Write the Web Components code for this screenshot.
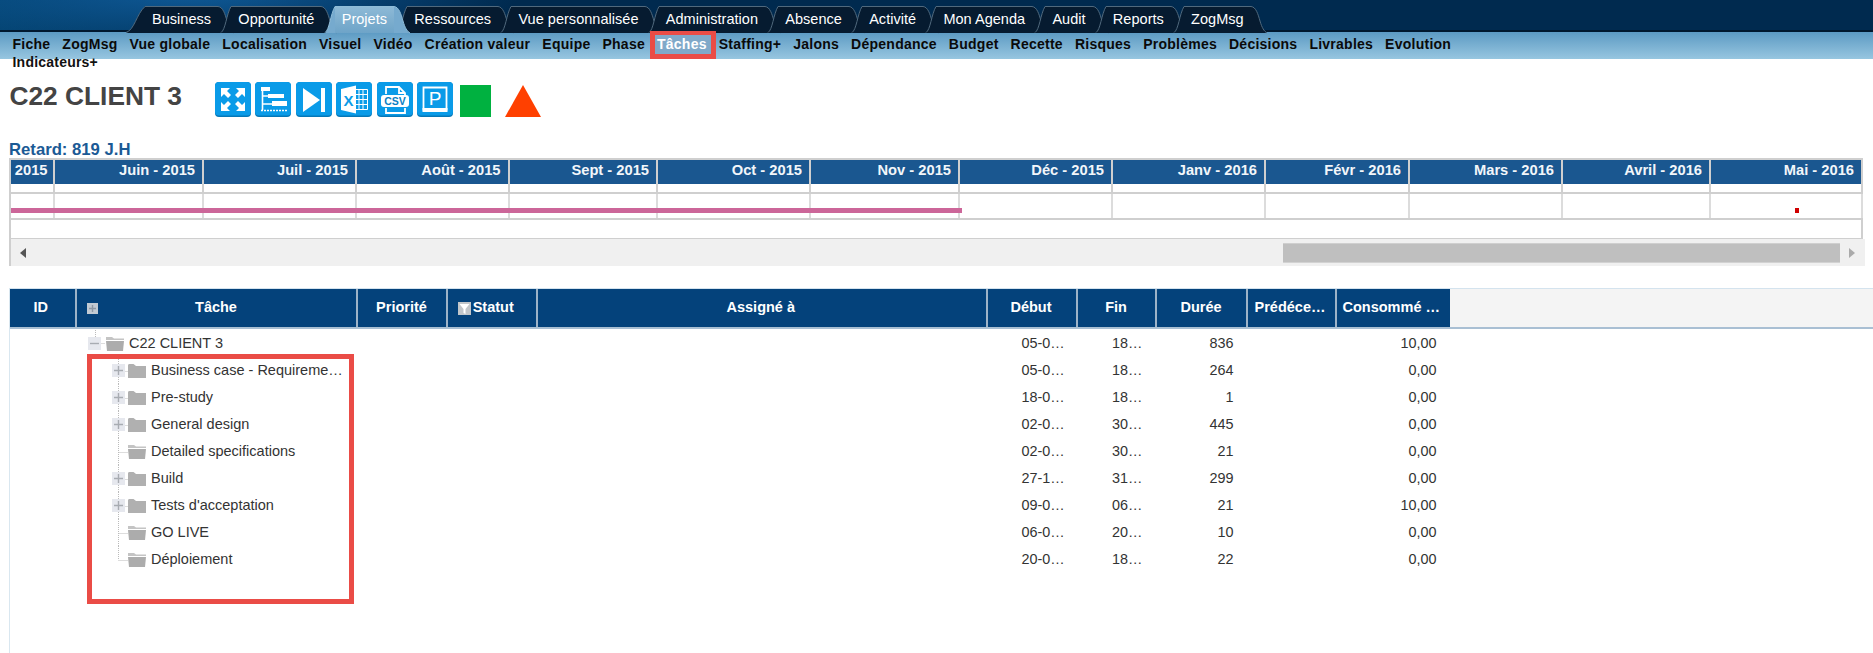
<!DOCTYPE html>
<html lang="fr">
<head>
<meta charset="utf-8">
<title>C22 CLIENT 3</title>
<style>
html,body{margin:0;padding:0;background:#fff;font-family:"Liberation Sans",Arial,sans-serif;overflow:hidden;height:653px}
main-page{display:block}
</style>
</head>
<body>
<main-page>
  <zog-topbar>
    <zog-tab first>Business</zog-tab><zog-tab>Opportunité</zog-tab><zog-tab active>Projets</zog-tab><zog-tab>Ressources</zog-tab><zog-tab>Vue personnalisée</zog-tab><zog-tab>Administration</zog-tab><zog-tab>Absence</zog-tab><zog-tab>Activité</zog-tab><zog-tab>Mon Agenda</zog-tab><zog-tab>Audit</zog-tab><zog-tab>Reports</zog-tab><zog-tab>ZogMsg</zog-tab>
  </zog-topbar>
  <zog-subnav>
    <zog-subitem>Fiche</zog-subitem><zog-subitem>ZogMsg</zog-subitem><zog-subitem>Vue globale</zog-subitem><zog-subitem>Localisation</zog-subitem><zog-subitem>Visuel</zog-subitem><zog-subitem>Vidéo</zog-subitem><zog-subitem>Création valeur</zog-subitem><zog-subitem>Equipe</zog-subitem><zog-subitem>Phase</zog-subitem><zog-subitem active>Tâches</zog-subitem><zog-subitem>Staffing+</zog-subitem><zog-subitem>Jalons</zog-subitem><zog-subitem>Dépendance</zog-subitem><zog-subitem>Budget</zog-subitem><zog-subitem>Recette</zog-subitem><zog-subitem>Risques</zog-subitem><zog-subitem>Problèmes</zog-subitem><zog-subitem>Décisions</zog-subitem><zog-subitem>Livrables</zog-subitem><zog-subitem>Evolution</zog-subitem><zog-subitem wrap>Indicateurs+</zog-subitem>
  </zog-subnav>
  <page-title>
    <span slot="title">C22 CLIENT 3</span>
    <tool-icon name="expand"></tool-icon><tool-icon name="gantt"></tool-icon><tool-icon name="end"></tool-icon><tool-icon name="excel"></tool-icon><tool-icon name="csv"></tool-icon><tool-icon name="project"></tool-icon><tool-icon name="square"></tool-icon><tool-icon name="triangle"></tool-icon>
  </page-title>
  <gantt-chart></gantt-chart>
  <task-table></task-table>
</main-page>
<red-box></red-box>
<script>
const shadow=(el,html)=>{el.attachShadow({mode:'open'}).innerHTML=html;};

customElements.define('zog-topbar',class extends HTMLElement{constructor(){super();shadow(this,`<style>
:host{display:flex;height:32px;box-sizing:border-box;padding:6px 0 0 126px;
background:radial-gradient(ellipse 330px 60px at 190px -8px,#0f5a98 0%,rgba(15,90,152,.55) 45%,rgba(0,42,79,0) 100%),linear-gradient(90deg,#03426f 0,#002a4f 300px);background-color:#002a4f;border-bottom:2px solid #00182f}
</style><slot></slot>`);}});

customElements.define('zog-tab',class extends HTMLElement{constructor(){super();
const lw=this.hasAttribute('first')?19:10;
shadow(this,`<style>
:host{display:flex;height:27px;margin-left:-12.75px;position:relative;color:#fff;font-size:14.5px;letter-spacing:.03px;
--f:#061b30;--s:#50697d;}
:host([first]){margin-left:0}
:host([active]){--f:#76aace;--s:#8fbcd8;z-index:2}
svg{display:block;height:27px;flex:none;overflow:visible}
.m{background:var(--f);border-top:1px solid var(--s);box-sizing:border-box;padding:4px 7px 0;line-height:17px;white-space:nowrap;height:27px}
:host([active]) .m{background:linear-gradient(#8db9d6,#6ea4c8)}
path.f{fill:var(--f)}path.l{fill:none;stroke:var(--s);stroke-width:1}
</style>
<svg width="${lw}" height="27" viewBox="0 0 ${lw} 27" preserveAspectRatio="none"><path class="f" d="M0 27C${lw*.45} 24 ${lw*.55} 8 ${lw} .5V27Z"/><path class="l" d="M0 26.5C${lw*.45} 24 ${lw*.55} 8 ${lw} .5"/></svg>
<div class="m"><slot></slot></div>
<svg width="16" height="27" viewBox="0 0 16 27" preserveAspectRatio="none"><path class="f" d="M0 .5C5 1 7 8 9 15S13 25 16 27H0Z"/><path class="l" d="M0 .5C5 1 7 8 9 15S13 25 16 27"/></svg>`);}});

customElements.define('zog-subnav',class extends HTMLElement{constructor(){super();shadow(this,`<style>
:host{display:flex;flex-wrap:wrap;align-content:flex-start;height:27px;box-sizing:border-box;padding:4px 0 0 12.5px;column-gap:12px;
background:linear-gradient(#5c9ac3,#97c6e0);color:#0a0a0a;font-size:14px;font-weight:700;line-height:17px;letter-spacing:.25px}
</style><slot></slot>`);}});

customElements.define('zog-subitem',class extends HTMLElement{constructor(){super();shadow(this,`<style>
:host{display:block;position:relative;white-space:nowrap}
:host([wrap]){flex-basis:100%;color:#111;line-height:18px;letter-spacing:.22px}
:host([active]){color:#fff}
.mark{display:none}
:host([active]) .mark{display:block;position:absolute;left:-7px;right:-9px;top:-5px;height:28px;box-sizing:border-box;border:5px solid #ea4c46;border-top-width:4px;background:#80a9c9}
span{position:relative}
</style><div class="mark"></div><span><slot></slot></span>`);}});

customElements.define('page-title',class extends HTMLElement{constructor(){super();shadow(this,`<style>
:host{display:flex;align-items:center;height:35px;margin-top:23px;padding-left:9.5px;gap:4.4px}
.t{width:201.1px;color:#444;font-size:26.3px;font-weight:700;line-height:35px;white-space:nowrap;margin-top:-7px}
</style><div class="t"><slot name="title"></slot></div><slot></slot>`);}});

const ICONS={
expand:`<g fill="#fff"><path d="M6 6h9l-3 3 4 4-3 3-4-4-3 3z"/><path d="M30 6v9l-3-3-4 4-3-3 4-4-3-3z"/><path d="M6 29v-9l3 3 4-4 3 3-4 4 3 3z"/><path d="M30 29h-9l3-3-4-4 3-3 4 4 3-3z"/></g>`,
gantt:`<g fill="none" stroke="#fff"><path d="M7.5 6v22" stroke-width="1.6"/><path d="M7.5 14h6M7.5 22h10" stroke-width="1.4"/></g><g fill="#fff"><rect x="6" y="5" width="9" height="4"/><rect x="13" y="12" width="16" height="4"/><rect x="17" y="19" width="15" height="5"/></g><path d="M6 28.5h26" stroke="#fff" stroke-width="1.6" stroke-dasharray="2 1"/>`,
end:`<path fill="#fff" d="M7 6l17 12L7 30z"/><rect fill="#fff" x="25" y="6" width="4" height="24"/>`,
excel:`<path fill="#fff" d="M5 7l15-3.5v28L5 28z"/><path fill="none" stroke="#fff" d="M20 7.5h11.5v20H20M23 7.5v20M27 7.5v20M20 12.5h11.5M20 17.5h11.5M20 22.5h11.5"/><text x="12.5" y="23.5" text-anchor="middle" font-family="Liberation Sans" font-weight="700" font-size="15" fill="#0a9be8">X</text>`,
csv:`<path fill="none" stroke="#fff" stroke-width="1.8" d="M9 12V5h13l6 6v6M22 5v6h6M9 26v5h19v-5"/><rect x="4" y="13" width="28" height="12" rx="3" fill="#fff"/><text x="18" y="22.6" text-anchor="middle" font-family="Liberation Sans" font-weight="700" font-size="10.5" fill="#0a7fc4">CSV</text>`,
project:`<path fill="none" stroke="#fff" stroke-width="1.8" d="M6.5 28.5v-23h23v23"/><rect x="5.5" y="26" width="25" height="4" fill="#fff"/><text x="18" y="22.5" text-anchor="middle" font-family="Liberation Sans" font-size="19" fill="#fff">P</text>`
};
customElements.define('tool-icon',class extends HTMLElement{constructor(){super();
const n=this.getAttribute('name');
let inner;
if(n==='square')inner=`<div class="sq"></div>`;
else if(n==='triangle')inner=`<svg class="tr" width="36" height="32" viewBox="0 0 36 32"><path fill="#ff4000" d="M18 0l18 32H0z"/></svg>`;
else inner=`<svg width="36" height="35" viewBox="0 0 36 35"><rect width="36" height="35" rx="4" fill="#0678b8"/><rect width="36" height="33.5" rx="4" fill="#0a9be8"/>${ICONS[n]}</svg>`;
shadow(this,`<style>:host{display:block;flex:none;height:35px}
:host([name=square]){margin:0 0 0 3px}:host([name=triangle]){margin:0 0 0 9px}
svg{display:block}.tr{margin-top:3px}.sq{width:31px;height:32px;margin-top:3px;background:#00b140}</style>${inner}`);}});

const MONTHS=[['2015',43.5],['Juin - 2015',149.5],['Juil - 2015',153],['Août - 2015',152.5],['Sept - 2015',148.5],['Oct - 2015',153],['Nov - 2015',149],['Déc - 2015',153],['Janv - 2016',153],['Févr - 2016',144],['Mars - 2016',153],['Avril - 2016',148],['Mai - 2016',152]];
customElements.define('gantt-chart',class extends HTMLElement{constructor(){super();
const row=(cls,text)=>`<div class="row ${cls}">`+MONTHS.map(m=>`<div class="c" style="width:${m[1]}px">${text?m[0]:''}</div>`).join('')+`</div>`;
shadow(this,`<style>
:host{display:block;margin:0 0 0 9px;width:1856px;box-sizing:border-box}
.ret{color:#1b5a95;font-size:16.7px;font-weight:700;line-height:17px;margin-top:24px;height:17px}
.box{border:solid #cfcfcf;border-width:2px 2px 0 2px;width:1854px;margin:0;box-sizing:border-box;position:relative}
.row{display:flex}
.c{box-sizing:border-box;flex:none;border-right:2px solid #cfcfcf;white-space:nowrap;overflow:hidden}
.head{height:24px;background:#1a5790}
.head .c{color:#f2f6fa;font-size:14.7px;font-weight:700;text-align:right;padding-right:7px;line-height:21px}
.head .c:first-child{padding-right:5px}
.thin{height:8px;border-bottom:0}
.cells{height:28px;border-top:2px solid #cfcfcf;border-bottom:2px solid #cfcfcf;box-sizing:border-box;position:relative}
.cells .c{border-right-color:#dcdcdc}
.bar{position:absolute;left:0;top:14px;width:951px;height:5px;background:#cc6699}
.dot{position:absolute;left:1784px;top:14px;width:4px;height:5px;background:#d00000}
.blank{height:18px;border-bottom:1px solid #cfcfcf}
.sb{display:flex;align-items:center;height:27px;width:1856px;background:#f0f0f0;border-left:2px solid #cfcfcf;box-sizing:border-box}
.l{width:1272px;box-sizing:border-box;padding-left:9px}
.th{width:557px;height:20px;background:#bfbfbf;box-sizing:border-box;border-top:1px solid #cfcfcf;border-bottom:1px solid #d2d2d2}
.r{padding-left:9px}
.tri{display:block}
</style>
<div class="ret">Retard: 819 J.H</div>
<div class="box">
${row('head',true)}${row('thin',false)}
<div class="cells">${row('inner',false).replace('class="row inner"','class="row inner" style="height:24px"')}<div class="bar"></div><div class="dot"></div></div>
<div class="blank"></div>
</div>
<div class="sb"><div class="l"><svg class="tri" width="6" height="10"><path d="M6 0v10L0 5z" fill="#555"/></svg></div><div class="th"></div><div class="r"><svg class="tri" width="6" height="10"><path d="M0 0v10l6-5z" fill="#aaa"/></svg></div></div>`);}});

const COLS='66.5px 281px 90px 90.5px 449.5px 90px 79px 91px 89px 113.5px';
const ROWS=[
['C22 CLIENT 3','root','05-0…','18…','836','10,00'],
['Business case - Requireme…','plus','05-0…','18…','264','0,00'],
['Pre-study','plus','18-0…','18…','1','0,00'],
['General design','plus','02-0…','30…','445','0,00'],
['Detailed specifications','leaf','02-0…','30…','21','0,00'],
['Build','plus','27-1…','31…','299','0,00'],
["Tests d'acceptation",'plus','09-0…','06…','21','10,00'],
['GO LIVE','leaf','06-0…','20…','10','0,00'],
['Déploiement','last','20-0…','18…','22','0,00']];
customElements.define('task-table',class extends HTMLElement{constructor(){super();
const heads=[['ID'],['Tâche','plus'],['Priorité'],['Statut','filter'],['Assigné à'],['Début'],['Fin'],['Durée'],['Prédéce…'],['Consommé …']];
const h=heads.map(([t,x])=>`<div class="hc">${x==='plus'?'<svg class="pl" width="11" height="11"><rect width="11" height="11" fill="#c2cad3"/><path d="M5.5 2v7M2 5.5h7" stroke="#8e98a4" stroke-width="1.4"/></svg>':''}${x==='filter'?'<svg class="fi" width="13" height="13"><rect width="13" height="13" fill="#c2c6ca"/><path d="M1.5 2h10L7.5 7v5L5.5 11V7z" fill="#fff"/></svg>':''}<span>${t}</span></div>`).join('');
const r=ROWS.map(a=>`<task-row text="${a[0].replace(/"/g,'&quot;')}" kind="${a[1]}" start="${a[2]}" end="${a[3]}" dur="${a[4]}" used="${a[5]}"></task-row>`).join('');
shadow(this,`<style>
:host{display:block;margin-top:22px;margin-left:9px;border-left:1px solid #d9e7f0;height:365px;--cols:${COLS}}
.head{display:grid;grid-template-columns:var(--cols) 1fr;height:41px;margin-bottom:1px;border-top:1px solid #d4e3ee;border-bottom:2px solid #a9bfd3;box-sizing:border-box}
.hc{background:#04427b;color:#fff;font-size:14.5px;font-weight:700;display:flex;align-items:center;justify-content:center;border-right:2px solid #9db3c8;position:relative;white-space:nowrap;overflow:hidden;gap:2px}
.hc:nth-child(10){border-right:0;padding-right:4px}
.hc:nth-child(9){padding-right:2px}
.hc:nth-child(1){padding-right:3px}
.hc:nth-child(4){padding-right:12px}
.hc:nth-child(5){padding-right:2px}
.hc:nth-child(6){padding-right:1px}
.hc span{position:relative;top:-1px}
.pl{position:absolute;left:10px;top:14px}
.fi{flex:none}
.fill{background:#f4f4f4}
</style><div class="head">${h}<div class="fill"></div></div>${r}`);}});

const folderClosed=`<svg width="18" height="14" viewBox="0 0 18 14"><path fill="#b0b0b0" d="M0 1.5C0 .7.5 0 1.5 0h4L8 2h10v12H0z"/></svg>`;
const folderOpen=`<svg width="18" height="14" viewBox="0 0 18 14"><path fill="#c4c4c4" d="M0 0h6l2 1.5h10V3H0z"/><path fill="#acacac" d="M0 4h18l-1 10H1z"/></svg>`;
const exp=s=>`<span class="ex"><svg width="13" height="13"><rect width="13" height="13" fill="#e6e8ee"/><path d="${s?'M2 6.5h9M6.5 2v9':'M2 6.5h9'}" stroke="#a8acb2" stroke-width="1.4"/></svg></span>`;
customElements.define('task-row',class extends HTMLElement{constructor(){super();
const g=n=>this.getAttribute(n);
const k=g('kind');
let node;
if(k==='root'){
 node=`<div class="tree root"><svg class="ln" width="28" height="27"><path d="M18.5 0v13M18.5 13.5H28" stroke="#bbb" stroke-dasharray="1 1" fill="none"/></svg>${exp(false)}<span class="fo">${folderOpen}</span><span class="tx">${g('text')}</span></div>`;
}else{
 const vert=k==='last'?'M41.5 0v14':'M41.5 0v27';
 node=`<div class="tree"><svg class="ln" width="52" height="27"><path d="${vert}M41.5 14.5H51" stroke="#bbb" stroke-dasharray="1 1" fill="none"/></svg>${k==='plus'?exp(true):''}<span class="fo ch">${k==='plus'?folderClosed:folderOpen}</span><span class="tx ch">${g('text')}</span></div>`;
}
shadow(this,`<style>
:host{display:grid;grid-template-columns:var(--cols);height:27px;color:#333;font-size:14.4px;line-height:27px;white-space:nowrap}
.tree{grid-column:2;position:relative;display:flex;align-items:center;height:27px}
.ln{position:absolute;left:0;top:0}
.ex{position:absolute;left:35px;top:7px;line-height:0}
.root .ex{left:11px;top:7px}
.fo{position:absolute;left:29.5px;top:7px;line-height:0}
.fo.ch{left:51px}
.tx{position:absolute;left:52.5px;top:0;font-size:14.5px}
.tx.ch{left:74.5px}
.ex svg,.fo svg{display:block}
.st{grid-column:6;padding-left:34px}
.en{grid-column:7;padding-left:34.5px}
.du{grid-column:8;text-align:right;padding-right:14px}
.us{grid-column:10;text-align:right;padding-right:13.5px}
</style>${node}<div class="st">${g('start')}</div><div class="en">${g('end')}</div><div class="du">${g('dur')}</div><div class="us">${g('used')}</div>`);}});

customElements.define('red-box',class extends HTMLElement{constructor(){super();shadow(this,`<style>
:host{position:absolute;left:87px;top:354px;width:267px;height:250px;box-sizing:border-box;border:5px solid #ea4c46;pointer-events:none}
</style>`);}});
</script>
</body>
</html>
